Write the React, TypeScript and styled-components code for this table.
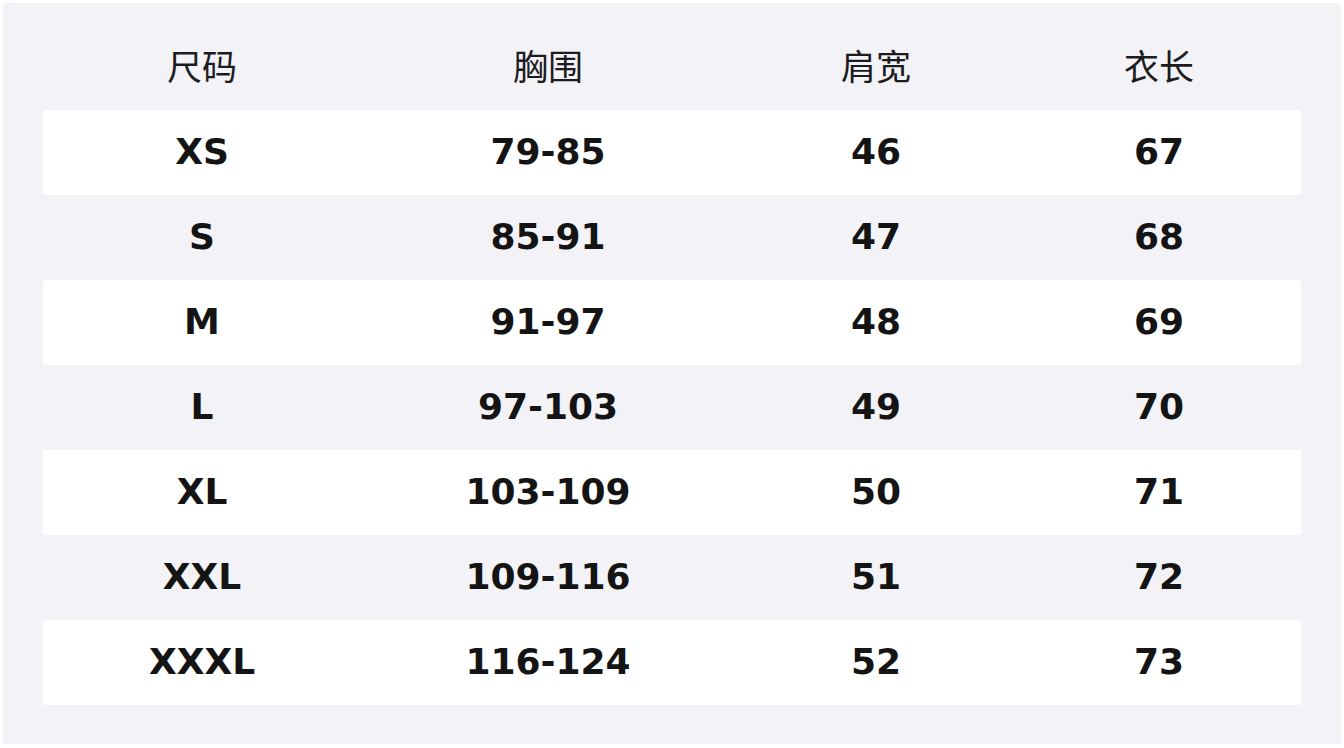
import styled, { createGlobalStyle } from 'styled-components';

const GlobalStyle = createGlobalStyle`
  html, body {
    margin: 0;
    padding: 0;
    background: #ffffff;
  }
`;

const columns = ['尺码', '胸围', '肩宽', '衣长'];

const sizes = [
  ['XS', '79-85', '46', '67'],
  ['S', '85-91', '47', '68'],
  ['M', '91-97', '48', '69'],
  ['L', '97-103', '49', '70'],
  ['XL', '103-109', '50', '71'],
  ['XXL', '109-116', '51', '72'],
  ['XXXL', '116-124', '52', '73'],
];

const Panel = styled.div`
  margin: 3px;
  width: 1338px;
  height: 741px;
  box-sizing: border-box;
  padding: 22px 40px 40px;
  background: #f2f2f7;
  border-radius: 4px;
`;

const Row = styled.div<{ $striped?: boolean }>`
  display: grid;
  grid-template-columns: 318px 374px 282px 284px;
  height: 85px;
  background: ${(p) => (p.$striped ? '#ffffff' : 'transparent')};
  border-radius: 2px;
`;

const HeadCell = styled.div`
  display: flex;
  align-items: center;
  justify-content: center;
  padding-bottom: 6px;
  font-family: "Noto Sans CJK SC", "Noto Sans", sans-serif;
  font-size: 35px;
  font-weight: 400;
  color: #1c1c1e;
`;

const Cell = styled.div`
  display: flex;
  align-items: center;
  justify-content: center;
  padding-bottom: 2px;
  font-family: "DejaVu Sans", "Noto Sans", sans-serif;
  font-size: 36px;
  font-weight: 700;
  color: #141414;
`;

export default function App() {
  return (
    <>
      <GlobalStyle />
      <Panel>
        <Row>
          {columns.map((c) => (
            <HeadCell key={c}>{c}</HeadCell>
          ))}
        </Row>
        {sizes.map((r, i) => (
          <Row key={r[0]} $striped={i % 2 === 0}>
            {r.map((v, j) => (
              <Cell key={j}>{v}</Cell>
            ))}
          </Row>
        ))}
      </Panel>
    </>
  );
}
